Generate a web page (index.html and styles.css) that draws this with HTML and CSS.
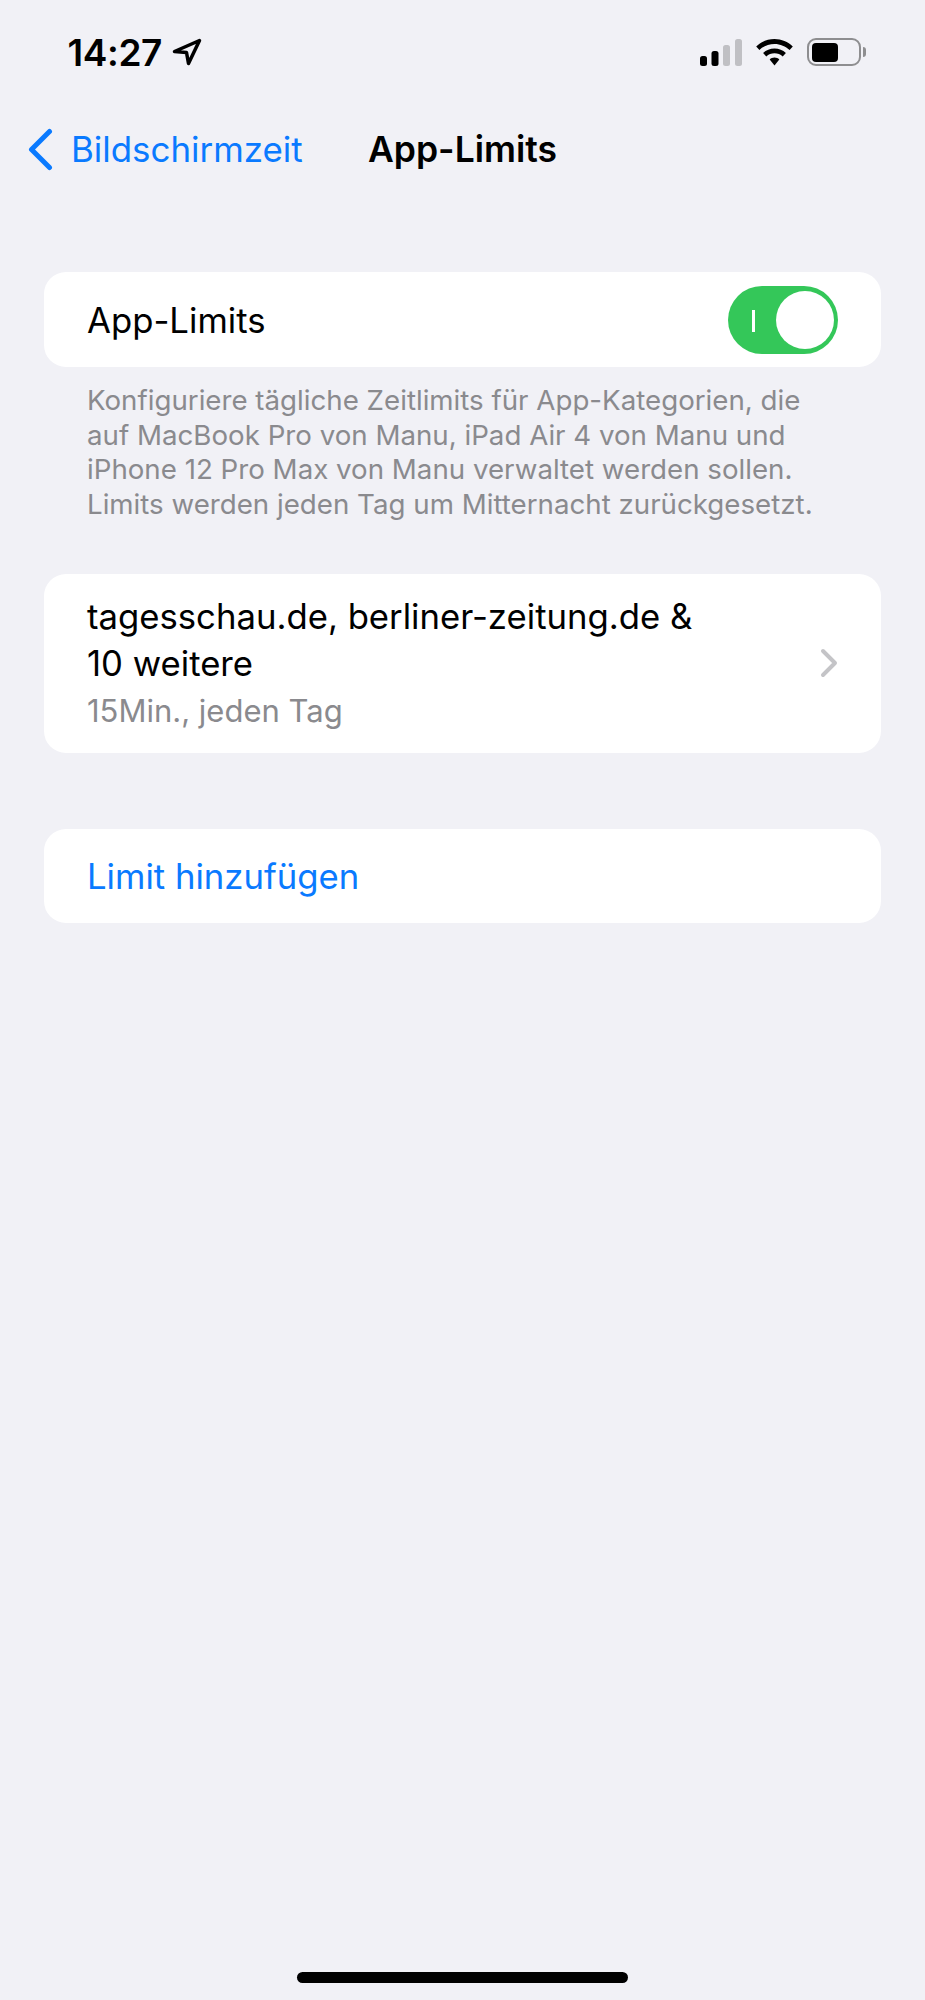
FILE: index.html
```html
<!DOCTYPE html>
<html lang="de">
<head>
  <meta charset="UTF-8">
  <meta name="viewport" content="width=device-width, initial-scale=1.0">
  <title>App-Limits</title>
  <link rel="stylesheet" href="styles.css">
</head>
<body>
  <div class="screen">
    <div class="status-bar">
      <div class="status-left">
        <span class="time">14:27</span>
        <svg class="icon-location" width="30" height="28" viewBox="0 0 30 28">
          <path d="M27.5 2.5 L2.5 13.5 L14.5 14.5 L16.5 25.5 Z" fill="none" stroke="#000" stroke-width="3.5" stroke-linejoin="round"/>
        </svg>
      </div>
      <div class="status-right">
        <svg width="42" height="27" viewBox="0 0 42 27">
          <rect x="0" y="17" width="7" height="10" rx="2.5" fill="#000"/>
          <rect x="11.5" y="12" width="7" height="15" rx="2.5" fill="#000"/>
          <rect x="23" y="6" width="7" height="21" rx="2.5" fill="#c0c0c4"/>
          <rect x="35" y="0" width="7" height="27" rx="2.5" fill="#c0c0c4"/>
        </svg>
        <svg class="icon-wifi" width="37" height="27" viewBox="0 0 37 27">
          <path d="M18.5 0 C25.5 0 32 2.8 36.8 7.4 L33.6 11 C29.6 7.2 24.3 4.9 18.5 4.9 C12.7 4.9 7.4 7.2 3.4 11 L0.2 7.4 C5 2.8 11.5 0 18.5 0 Z" fill="#000"/>
          <path d="M18.5 9.4 C22.9 9.4 26.9 11.1 29.9 13.9 L26.7 17.4 C24.5 15.4 21.6 14.2 18.5 14.2 C15.4 14.2 12.5 15.4 10.3 17.4 L7.1 13.9 C10.1 11.1 14.1 9.4 18.5 9.4 Z" fill="#000"/>
          <path d="M18.5 18.6 C20.4 18.6 22 19.3 23.3 20.5 L18.5 26.6 L13.7 20.5 C15 19.3 16.6 18.6 18.5 18.6 Z" fill="#000"/>
        </svg>
        <div class="battery">
          <div class="battery-body">
            <div class="battery-fill"></div>
          </div>
          <div class="battery-nub"></div>
        </div>
      </div>
    </div>

    <div class="nav-bar">
      <div class="nav-back">
        <svg width="26" height="43" viewBox="0 0 26 43">
          <path d="M22.5 3.5 L4.5 21.5 L22.5 39.5" fill="none" stroke="#0a7aff" stroke-width="5" stroke-linecap="round" stroke-linejoin="round"/>
        </svg>
        <span>Bildschirmzeit</span>
      </div>
      <div class="nav-title">App-Limits</div>
    </div>

    <div class="card row-toggle">
      <span>App-Limits</span>
      <div class="toggle">
        <div class="toggle-mark"></div>
        <div class="toggle-knob"></div>
      </div>
    </div>
    <p class="note">Konfiguriere tägliche Zeitlimits für App-Kategorien, die<br>auf MacBook Pro von Manu, iPad Air 4 von Manu und<br>iPhone 12 Pro Max von Manu verwaltet werden sollen.<br>Limits werden jeden Tag um Mitternacht zurückgesetzt.</p>

    <div class="card row-limit">
      <div>
        <div class="limit-name">tagesschau.de, berliner-zeitung.de &amp;<br>10 weitere</div>
        <div class="limit-time">15Min., jeden Tag</div>
      </div>
      <svg width="19" height="30" viewBox="0 0 19 30">
        <path d="M3 3 L15 15 L3 27" fill="none" stroke="#c4c4c7" stroke-width="4" stroke-linecap="round" stroke-linejoin="round"/>
      </svg>
    </div>

    <div class="card row-add">Limit hinzufügen</div>

    <div class="home-indicator"></div>
  </div>
</body>
</html>
```

FILE: styles.css
```css
body {
  font-family: Inter, "Liberation Sans", sans-serif;
  background-color: #f1f1f6;
  color: #000;
  margin: 0;
  padding: 0;
}

.screen {
  display: flex;
  flex-direction: column;
  min-height: 2000px;
  box-sizing: border-box;
  padding: 0 44px 0 43.5px;
}

.status-bar {
  display: flex;
  justify-content: space-between;
  align-items: center;
  height: 28px;
  margin: 38px 15px 0 24px;
}

.status-left {
  display: flex;
  align-items: center;
  gap: 10px;
}

.time {
  font-size: 37px;
  font-weight: 600;
  letter-spacing: -0.4px;
}

.status-right {
  display: flex;
  align-items: center;
  gap: 14px;
}

.battery {
  display: flex;
  align-items: center;
  gap: 2px;
}

.battery-body {
  box-sizing: border-box;
  width: 54px;
  height: 28px;
  border: 2.5px solid #8e8e90;
  border-radius: 9px;
  padding: 2.5px 3px;
}

.battery-fill {
  width: 26px;
  height: 100%;
  background-color: #000;
  border-radius: 4px;
}

.battery-nub {
  width: 3px;
  height: 10px;
  background-color: #8e8e90;
  border-radius: 0 3px 3px 0;
}

.nav-bar {
  display: grid;
  grid-template-columns: 1fr auto 1fr;
  align-items: center;
  height: 44px;
  margin: 61px -44px 0 -43.5px;
  padding: 0 27px;
}

.nav-back {
  display: flex;
  align-items: center;
  gap: 18px;
  font-size: 34.9px;
  color: #0a7aff;
}

.nav-title {
  font-size: 35.5px;
  font-weight: 600;
}

.card {
  background-color: #fff;
  border-radius: 22px;
  font-size: 34.7px;
}

.row-toggle {
  display: flex;
  justify-content: space-between;
  align-items: center;
  height: 95px;
  margin-top: 101px;
  padding: 0 43px 0 43.5px;
}

.toggle {
  position: relative;
  width: 110px;
  height: 68px;
  background-color: #34c759;
  border-radius: 34px;
}

.toggle-mark {
  position: absolute;
  left: 24px;
  top: 24px;
  width: 2.5px;
  height: 22px;
  background-color: #fff;
}

.toggle-knob {
  position: absolute;
  right: 4px;
  top: 5px;
  width: 58px;
  height: 58px;
  background-color: #fff;
  border-radius: 50%;
}

.note {
  margin: 16px 0 0;
  padding: 0 44px 0 43.5px;
  font-size: 27.7px;
  line-height: 34.5px;
  color: #8a8a8e;
  white-space: nowrap;
}

.row-limit {
  display: flex;
  justify-content: space-between;
  align-items: center;
  height: 179px;
  margin-top: 52.5px;
  padding: 0 42px 0 43.5px;
}

.limit-name {
  line-height: 47px;
}

.limit-time {
  margin-top: 2px;
  font-size: 31px;
  line-height: 44px;
  color: #8a8a8e;
}

.row-add {
  display: flex;
  align-items: center;
  height: 94px;
  margin-top: 76px;
  padding: 0 43.5px;
  color: #0a7aff;
}

.home-indicator {
  align-self: center;
  width: 331px;
  height: 11px;
  margin-top: auto;
  margin-bottom: 17px;
  background-color: #000;
  border-radius: 6px;
}
```
